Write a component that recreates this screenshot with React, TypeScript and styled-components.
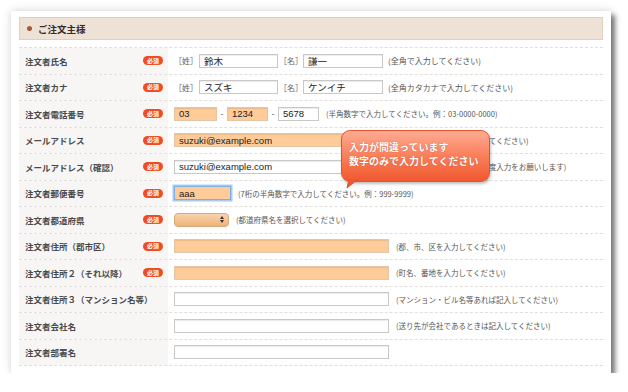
import styled, { createGlobalStyle } from 'styled-components';

const GlobalStyle = createGlobalStyle`
  html, body {
    margin: 0;
    padding: 0;
    background: #ffffff;
  }
  body {
    font-family: "Noto Sans CJK JP", "Noto Sans", "Liberation Sans", sans-serif;
    color: #444444;
  }
`;

const Window = styled.div`
  position: relative;
  box-sizing: border-box;
  margin: 11px 0 0 11px;
  width: 600px;
  height: 362px;
  padding: 6px 8px;
  background: #ffffff;
  box-shadow: 4px 4px 5px rgba(0, 0, 0, 0.5), 0 0 9px rgba(0, 0, 0, 0.16);
`;

const SectionHeader = styled.h2`
  box-sizing: border-box;
  display: flex;
  align-items: center;
  gap: 6px;
  height: 23px;
  margin: 0;
  padding-left: 7px;
  background: #eee2d7;
  border: 1px solid #e3cfbe;
  font-size: 9.5px;
  font-weight: 700;
  color: #3a2a22;
`;

const Bullet = styled.span`
  width: 5px;
  height: 5px;
  border-radius: 50%;
  background: #a35a36;
`;

const Table = styled.div`
  margin-top: 7px;
  border-top: 1px dashed #e2dedb;
`;

const Row = styled.div`
  box-sizing: border-box;
  display: grid;
  grid-template-columns: 149px 1fr;
  height: 26.5px;
  border-bottom: 1px dashed #e2dedb;
`;

const LabelCell = styled.div`
  display: flex;
  align-items: center;
  justify-content: space-between;
  padding: 0 5px 0 6px;
  background: #f7f6f4;
  font-size: 8.5px;
  font-weight: 700;
  color: #4a4a4a;
`;

const Badge = styled.span`
  display: inline-flex;
  align-items: center;
  justify-content: center;
  width: 20px;
  height: 9px;
  border-radius: 5px;
  background: #ef4c22;
  color: #ffffff;
  font-size: 6px;
  font-weight: 700;
  line-height: 1;
`;

const ValueCell = styled.div`
  display: flex;
  align-items: center;
  padding-left: 6px;
  font-size: 8px;
  color: #555555;
`;

const Bracket = styled.span<{ $second?: boolean }>`
  margin: 0 ${(p) => (p.$second ? 0 : 1)}px 0 ${(p) => (p.$second ? 1 : 0)}px;
  font-size: 8px;
  color: #666666;
`;

const TextField = styled.div<{ $w: number; $error?: boolean; $focus?: boolean }>`
  box-sizing: border-box;
  display: flex;
  align-items: center;
  width: ${(p) => p.$w}px;
  height: 14px;
  padding: 0 4px;
  background: ${(p) => (p.$error ? '#ffcb98' : '#ffffff')};
  border: 1px solid ${(p) => (p.$focus ? '#7eaee6' : p.$error ? '#e3c6a8' : '#c8c8c8')};
  box-shadow: ${(p) =>
    p.$focus ? '0 0 0 1.5px #a9cbf2' : 'inset 0 1px 1px rgba(0, 0, 0, 0.08)'};
  font-family: "Liberation Sans", "Noto Sans CJK JP", sans-serif;
  font-size: 9.5px;
  color: #222222;
`;

const Dash = styled.span`
  width: 10px;
  text-align: center;
  font-size: 9px;
  color: #666666;
`;

const Hint = styled.span<{ $big?: boolean }>`
  margin-left: ${(p) => (p.$big ? 5 : 7)}px;
  font-size: ${(p) => (p.$big ? 8 : 7.5)}px;
  color: #555555;
  white-space: nowrap;
`;

const Select = styled.div`
  box-sizing: border-box;
  position: relative;
  width: 55px;
  height: 14px;
  border: 1px solid #d7a878;
  border-radius: 4px;
  background: linear-gradient(#f9d4ad, #eeb27a);
`;

const SelectArrows = styled.span`
  position: absolute;
  right: 4px;
  top: 2px;
  display: flex;
  flex-direction: column;
  gap: 1px;
`;

const Tooltip = styled.div`
  position: absolute;
  left: 330px;
  top: 119px;
  box-sizing: border-box;
  width: 149px;
  height: 52px;
  padding: 9px 0 0 7px;
  border: 1px solid #e2532c;
  border-radius: 9px;
  background: linear-gradient(#ffab93, #fa7a55 55%, #f0592f);
  box-shadow: 1px 2px 3px rgba(0, 0, 0, 0.25);
  font-size: 10px;
  font-weight: 700;
  line-height: 14px;
  color: #ffffff;
  text-shadow: 0 0 1px rgba(120, 40, 10, 0.6);
`;

const TooltipTail = styled.svg`
  position: absolute;
  left: 2px;
  top: 48px;
`;

type Field = { w: number; value?: string; error?: boolean; focus?: boolean };

type RowDef = {
  label: string;
  required?: boolean;
  kind: 'name' | 'phone' | 'single' | 'select';
  fields?: Field[];
  hint?: string;
  bigHint?: boolean;
};

const rows: RowDef[] = [
  {
    label: '注文者氏名',
    required: true,
    kind: 'name',
    fields: [{ w: 79, value: '鈴木' }, { w: 80, value: '謙一' }],
    hint: '(全角で入力してください)',
    bigHint: true,
  },
  {
    label: '注文者カナ',
    required: true,
    kind: 'name',
    fields: [{ w: 79, value: 'スズキ' }, { w: 80, value: 'ケンイチ' }],
    hint: '(全角カタカナで入力してください)',
    bigHint: true,
  },
  {
    label: '注文者電話番号',
    required: true,
    kind: 'phone',
    fields: [
      { w: 43, value: '03', error: true },
      { w: 41, value: '1234', error: true },
      { w: 41, value: '5678' },
    ],
    hint: '(半角数字で入力してください。例：03-0000-0000)',
  },
  {
    label: 'メールアドレス',
    required: true,
    kind: 'single',
    fields: [{ w: 238, value: 'suzuki@example.com', error: true }],
    hint: '(半角英数字で入力してください)',
  },
  {
    label: 'メールアドレス（確認）',
    required: true,
    kind: 'single',
    fields: [{ w: 238, value: 'suzuki@example.com' }],
    hint: '(確認のため、もう一度入力をお願いします)',
  },
  {
    label: '注文者郵便番号',
    required: true,
    kind: 'single',
    fields: [{ w: 57, value: 'aaa', error: true, focus: true }],
    hint: '(7桁の半角数字で入力してください。例：999-9999)',
  },
  {
    label: '注文者都道府県',
    required: true,
    kind: 'select',
    hint: '(都道府県名を選択してください)',
  },
  {
    label: '注文者住所（郡市区）',
    required: true,
    kind: 'single',
    fields: [{ w: 215, error: true }],
    hint: '(郡、市、区を入力してください)',
  },
  {
    label: '注文者住所２（それ以降）',
    required: true,
    kind: 'single',
    fields: [{ w: 215, error: true }],
    hint: '(町名、番地を入力してください)',
  },
  {
    label: '注文者住所３（マンション名等）',
    kind: 'single',
    fields: [{ w: 215 }],
    hint: '(マンション・ビル名等あれば記入してください)',
  },
  {
    label: '注文者会社名',
    kind: 'single',
    fields: [{ w: 215 }],
    hint: '(送り先が会社であるときは記入してください)',
  },
  {
    label: '注文者部署名',
    kind: 'single',
    fields: [{ w: 215 }],
  },
];

function FieldBox({ f }: { f: Field }) {
  return (
    <TextField $w={f.w} $error={f.error} $focus={f.focus}>
      {f.value}
    </TextField>
  );
}

function RowValue({ row }: { row: RowDef }) {
  const fields = row.fields ?? [];
  if (row.kind === 'name') {
    return (
      <>
        <Bracket>［姓］</Bracket>
        <FieldBox f={fields[0]} />
        <Bracket $second>［名］</Bracket>
        <FieldBox f={fields[1]} />
      </>
    );
  }
  if (row.kind === 'phone') {
    return (
      <>
        <FieldBox f={fields[0]} />
        <Dash>-</Dash>
        <FieldBox f={fields[1]} />
        <Dash>-</Dash>
        <FieldBox f={fields[2]} />
      </>
    );
  }
  if (row.kind === 'select') {
    return (
      <Select>
        <SelectArrows>
          <svg width="4" height="3" viewBox="0 0 4 3">
            <path d="M0 3 L2 0 L4 3 Z" fill="#333" />
          </svg>
          <svg width="4" height="3" viewBox="0 0 4 3">
            <path d="M0 0 L2 3 L4 0 Z" fill="#333" />
          </svg>
        </SelectArrows>
      </Select>
    );
  }
  return <FieldBox f={fields[0]} />;
}

export default function App() {
  return (
    <>
      <GlobalStyle />
      <Window>
        <SectionHeader>
          <Bullet />
          ご注文主様
        </SectionHeader>
        <Table>
          {rows.map((row) => (
            <Row key={row.label}>
              <LabelCell>
                <span>{row.label}</span>
                {row.required && <Badge>必須</Badge>}
              </LabelCell>
              <ValueCell>
                <RowValue row={row} />
                {row.hint && <Hint $big={row.bigHint}>{row.hint}</Hint>}
              </ValueCell>
            </Row>
          ))}
        </Table>
        <Tooltip>
          入力が間違っています
          <br />
          数字のみで入力してください
          <TooltipTail width="16" height="10" viewBox="0 0 16 10">
            <path d="M5 0 L3 9 L14 0" fill="#f0592f" stroke="#e2532c" strokeWidth="1" />
            <path d="M5.5 -1 L14 -1 L13 0.5 L5.5 0.5 Z" fill="#f0592f" />
          </TooltipTail>
        </Tooltip>
      </Window>
    </>
  );
}
